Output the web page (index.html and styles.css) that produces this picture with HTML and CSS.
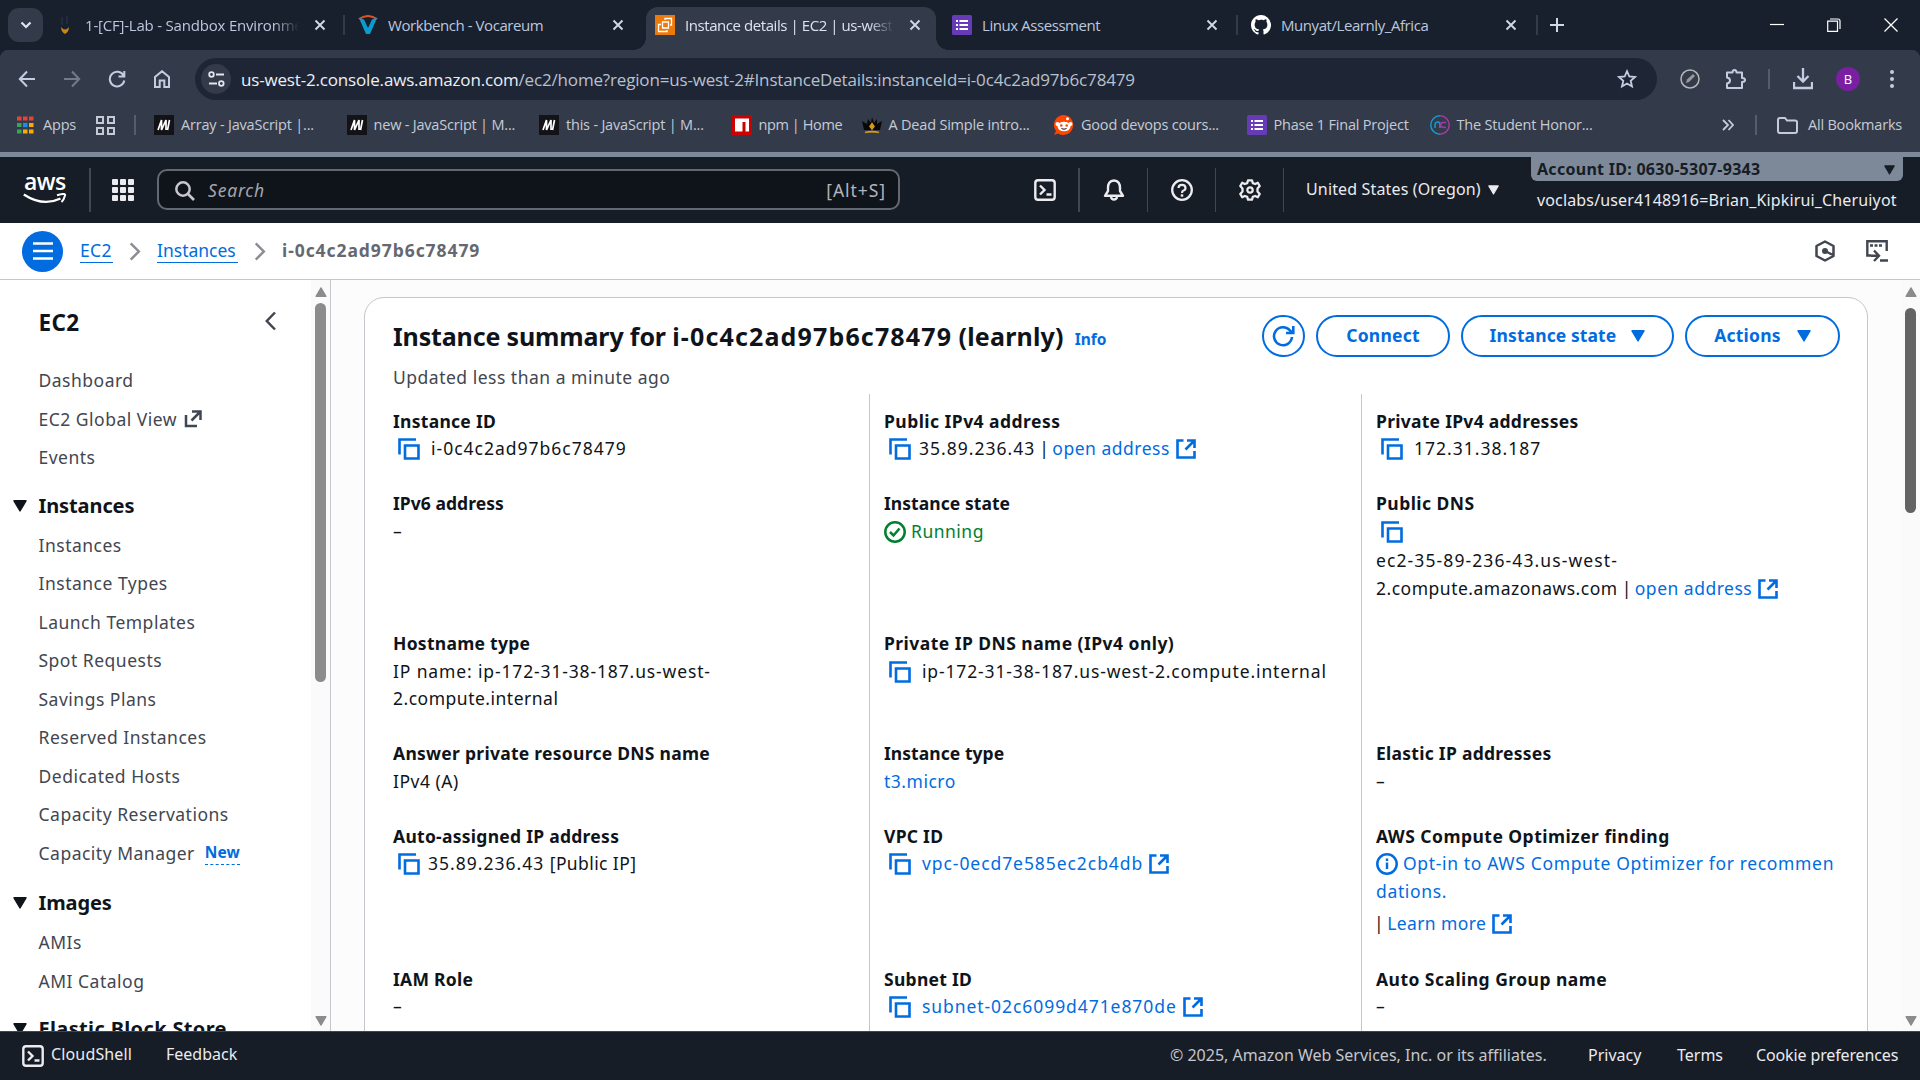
FILE: index.html
```html
<!DOCTYPE html>
<html lang="en">
<head>
<meta charset="utf-8">
<title>Instance details | EC2 | us-west-2</title>
<link rel="stylesheet" href="styles.css">
</head>
<body>
<svg class="defs" aria-hidden="true">
  <symbol id="x" viewBox="0 0 12 12"><path d="M1.5 1.5l9 9M10.5 1.5l-9 9" fill="none" stroke="currentColor" stroke-width="1.9"/></symbol>
  <symbol id="copy" viewBox="0 0 22 22"><path d="M1.5 16.500V1.500H18M7 7.500h13.500v13H7z" fill="none" stroke="currentColor" stroke-width="2.600"/></symbol>
  <symbol id="ext" viewBox="0 0 20 20"><path d="M7.500 1.500H1.500V18.500H18.500V12M11 1.500H18.500V9M18 2L9.500 10.500" fill="none" stroke="currentColor" stroke-width="2.600"/></symbol>
  <symbol id="ext2" viewBox="0 0 18 18"><path d="M2 5V16H13M8 1.500H16.500V10M16 2L7.500 10.500" fill="none" stroke="currentColor" stroke-width="2.500"/></symbol>
  <symbol id="tri" viewBox="0 0 14 12"><path d="M1 .8H13L7 11z" fill="currentColor" stroke="currentColor" stroke-width="1.400" stroke-linejoin="round"/></symbol>
  <symbol id="chev" viewBox="0 0 12 20"><path d="M1.500 1.500L10 10L1.500 18.500" fill="none" stroke="currentColor" stroke-width="2.600"/></symbol>
  <symbol id="shell" viewBox="0 0 22 22"><path d="M4 1.300H18Q20.700 1.300 20.700 4V18Q20.700 20.700 18 20.700H4Q1.300 20.700 1.300 18V4Q1.300 1.300 4 1.300zM6 6.500L10.500 11L6 15.500M12.500 15.500H17.500" fill="none" stroke="currentColor" stroke-width="2.400"/></symbol>
  <symbol id="mdn" viewBox="0 0 20 20"><path d="M0 0h20v20H0z" fill="#121217"/><path d="M4 15L7.500 5V15L12 5V15M15.500 5L13.500 15" fill="none" stroke="#fff" stroke-width="1.700"/></symbol>
  <symbol id="form" viewBox="0 0 20 20"><rect width="20" height="20" rx="1.500" fill="#673ab7"/><path d="M7.500 6H16M7.500 10H16M7.500 14H16M4 6h2M4 10h2M4 14h2" stroke="#fff" stroke-width="2"/></symbol>
</svg>

<header class="browser">
  <div class="tabstrip">
    <span class="tab-menu"><svg width="12" height="8" viewBox="0 0 12 8"><path d="M1.500 1.500L6 6L10.500 1.500" fill="none" stroke="currentColor" stroke-width="2.200"/></svg></span>
    <div class="tab tab-a">
      <svg class="fav" viewBox="0 0 20 20"><path d="M6 12Q10 17 14 12Q14 17 10 19Q6 17 6 12z" fill="#c8850f"/><path d="M7 2V10M12 1V9" stroke="#202c3a" stroke-width="2"/></svg>
      <span class="tab-title fade">1-[CF]-Lab - Sandbox Environment</span>
      <svg class="close"><use href="#x"/></svg>
    </div>
    <i class="tab-sep"></i>
    <div class="tab tab-b">
      <svg class="fav" viewBox="0 0 20 20"><path d="M1 4Q10-2 19 4" fill="none" stroke="#d9542b" stroke-width="2"/><path d="M1 3L8 19H12L19 3L14 4.500L10 13L6 4.500z" fill="#0b9bd0"/></svg>
      <span class="tab-title">Workbench - Vocareum</span>
      <svg class="close"><use href="#x"/></svg>
    </div>
    <div class="tab active">
      <svg class="fav" viewBox="0 0 20 20"><path d="M0 0h20v20H0z" fill="#ed7b0c"/><path d="M7.500 7h6v6h-6zM10 5V3.500h6.500V10H15M12 15v1.500H3.500V9.500H6" fill="none" stroke="#fff" stroke-width="1.300"/></svg>
      <span class="tab-title fade">Instance details | EC2 | us-west-2</span>
      <svg class="close"><use href="#x"/></svg>
    </div>
    <div class="tab tab-d">
      <svg class="fav"><use href="#form"/></svg>
      <span class="tab-title">Linux Assessment</span>
      <svg class="close"><use href="#x"/></svg>
    </div>
    <i class="tab-sep"></i>
    <div class="tab tab-b">
      <svg class="fav" viewBox="0 0 16 16"><path fill="#fff" d="M8 0C3.580 0 0 3.580 0 8c0 3.540 2.290 6.530 5.470 7.590.4.070.55-.17.55-.38v-1.490c-2.230.480-2.700-.940-2.700-.940-.360-.920-.890-1.170-.890-1.170-.730-.500.050-.490.050-.490.810.060 1.230.830 1.230.830.720 1.230 1.880.870 2.330.660.070-.520.280-.870.510-1.070-1.780-.2-3.640-.890-3.640-3.950 0-.870.310-1.590.820-2.150-.080-.200-.360-1.020.080-2.120 0 0 .670-.210 2.200.820A7.700 7.700 0 0 1 8 3.870c.680 0 1.360.090 2 .270 1.530-1.040 2.200-.820 2.200-.820.440 1.100.160 1.920.080 2.120.510.560.820 1.270.820 2.150 0 3.070-1.870 3.750-3.650 3.950.290.250.540.730.540 1.480v2.190c0 .210.150.460.550.380A8 8 0 0 0 8 0z"/></svg>
      <span class="tab-title">Munyat/Learnly_Africa</span>
      <svg class="close"><use href="#x"/></svg>
    </div>
    <i class="tab-sep"></i>
    <svg class="plus" width="14" height="14" viewBox="0 0 14 14"><path d="M7 0V14M0 7H14" stroke="currentColor" stroke-width="2"/></svg>
    <div class="window">
      <svg width="14" height="14" viewBox="0 0 14 14"><path d="M0 6.500H14" stroke="#fff" stroke-width="1.200"/></svg>
      <svg width="14" height="14" viewBox="0 0 14 14"><path d="M.7 3.200H10.500V13.300H.7zM3 1H11Q13 1 13 3V11" fill="none" stroke="#fff" stroke-width="1.200"/></svg>
      <svg width="14" height="14" viewBox="0 0 14 14"><path d="M.5.5L13.500 13.500M13.500.5L.5 13.500" stroke="#fff" stroke-width="1.300"/></svg>
    </div>
  </div>
  <div class="toolbar">
    <nav class="nav">
      <svg viewBox="0 0 18 18"><path d="M17 9H2M9 1.500L1.800 9L9 16.500" fill="none" stroke="currentColor" stroke-width="2"/></svg>
      <svg class="dim" viewBox="0 0 18 18"><path d="M1 9H16M9 1.500L16.200 9L9 16.500" fill="none" stroke="currentColor" stroke-width="2"/></svg>
      <svg viewBox="0 0 18 18"><path d="M15.500 5.500A7.300 7.300 0 1 0 16.300 10.500M16.300 1V6.500H10.500" fill="none" stroke="currentColor" stroke-width="2"/></svg>
      <svg viewBox="0 0 18 18"><path d="M2 7L9 1.200L16 7V17H11.300V10.500H6.700V17H2z" fill="none" stroke="currentColor" stroke-width="2"/></svg>
    </nav>
    <div class="omnibox">
      <span class="site"><svg width="17" height="16" viewBox="0 0 17 16"><path d="M8 3.500H16M1 12.500H9" stroke="currentColor" stroke-width="2"/><circle cx="3.500" cy="3.500" r="2.300" fill="none" stroke="currentColor" stroke-width="1.800"/><circle cx="13.300" cy="12.500" r="2.300" fill="none" stroke="currentColor" stroke-width="1.800"/></svg></span>
      <span class="url"><b>us-west-2.console.aws.amazon.com</b>/ec2/home?region=us-west-2#InstanceDetails:instanceId=i-0c4c2ad97b6c78479</span>
      <svg width="20" height="20" viewBox="0 0 20 20"><path d="M10 2.200L12.300 7.500L18 8L13.700 11.800L15 17.500L10 14.500L5 17.500L6.300 11.800L2 8L7.700 7.500z" fill="none" stroke="currentColor" stroke-width="1.800"/></svg>
    </div>
    <div class="actions">
      <svg width="20" height="20" viewBox="0 0 20 20"><circle cx="10" cy="10" r="9" fill="none" stroke="#b5b7b9" stroke-width="1.500"/><path d="M6 14L7 10.500L13 5L15 7L9 13z" fill="#999"/></svg>
      <svg class="puzzle" width="22" height="22" viewBox="0 0 22 22"><path d="M2 4.500H7.500Q7.500 2 9.500 2T11.500 4.500H17V10Q20 10 20 12T17 14V20H2V15.500Q5 15 5 12.500T2 9.500z" fill="none" stroke="currentColor" stroke-width="2" stroke-linejoin="round"/></svg>
      <i class="bar-sep"></i>
      <svg class="dl" width="20" height="22" viewBox="0 0 20 22"><path d="M10 0V13M4.500 8L10 13.500L15.500 8M1 14V20H19V14" fill="none" stroke="currentColor" stroke-width="2.300"/></svg>
      <span class="avatar">B</span>
      <svg width="6" height="20" viewBox="0 0 6 20" fill="currentColor"><circle cx="3" cy="3" r="2"/><circle cx="3" cy="10" r="2"/><circle cx="3" cy="17" r="2"/></svg>
    </div>
  </div>
  <div class="bookmarks">
    <span class="apps"><svg width="17" height="18" viewBox="0 0 17 18"><path d="M0 2.500H4.500M6 2.500H10.500M12 2.500H16.500" stroke="#ea4335" stroke-width="4.200"/><path d="M0 9H4.500M0 15.500H4.500" stroke="#34a853" stroke-width="4.200"/><path d="M6 9H10.500" stroke="#1a8cf0" stroke-width="4.200"/><path d="M12 9H16.500M6 15.500H10.500M12 15.500H16.500" stroke="#fbab08" stroke-width="4.200"/></svg>Apps</span>
    <svg class="groups" width="19" height="19" viewBox="0 0 19 19"><path d="M1 1h6v6H1zM12 1h6v6h-6zM1 12h6v6H1zM12 12h6v6h-6z" fill="none" stroke="currentColor" stroke-width="2"/></svg>
    <i class="bar-sep"></i>
    <div class="marks">
      <span class="mark"><svg><use href="#mdn"/></svg>Array - JavaScript |...</span>
      <span class="mark"><svg><use href="#mdn"/></svg>new - JavaScript | M...</span>
      <span class="mark"><svg><use href="#mdn"/></svg>this - JavaScript | M...</span>
      <span class="mark short"><svg viewBox="0 0 20 20"><path d="M0 0h20v20H0z" fill="#c00"/><path d="M3 3.500H17V16.500H13.500V7H10.500V16.500H3z" fill="#fff"/></svg>npm | Home</span>
      <span class="mark"><svg viewBox="0 0 20 20"><path d="M2 15L0 6L5 9L6 4L9 8L10 2L12 8L15 4L15 9L20 6L18 15z" fill="#080808"/><path d="M3 17.500Q10 15.500 17 17.500M10 8.500L12 11.500L10 14L8 11.500z" stroke="#d99a13" fill="#d99a13" stroke-width="1.500"/></svg>A Dead Simple intro...</span>
      <span class="mark"><svg viewBox="0 0 20 20"><path d="M10 0A10 10 0 1 1 4 18.500L0 20L2 16A10 10 0 0 1 10 0z" fill="#ff4500"/><ellipse cx="10" cy="11.500" rx="6.500" ry="4.800" fill="#fff"/><circle cx="3.500" cy="9" r="2" fill="#fff"/><circle cx="16.500" cy="9" r="2" fill="#fff"/><circle cx="13.500" cy="3.800" r="1.500" fill="#fff"/><circle cx="7.300" cy="10.500" r="1.300" fill="#ff4500"/><circle cx="12.700" cy="10.500" r="1.300" fill="#ff4500"/><path d="M7.500 13.500Q10 15 12.500 13.500" fill="none" stroke="#111"/></svg>Good devops cours...</span>
      <span class="mark phase"><svg><use href="#form"/></svg>Phase 1 Final Project</span>
      <span class="mark"><svg viewBox="0 0 20 20"><path d="M10 .8A9.200 9.200 0 1 0 10 19.200M5 13V10Q5 7 8 7Q10 7 10 10V13" fill="none" stroke="#119bd2" stroke-width="1.500"/><path d="M10 .8A9.200 9.200 0 0 1 10 19.200M16 7.500H13Q10.500 7.500 10.500 10Q10.500 12.500 16 12.500" fill="none" stroke="#a43ba5" stroke-width="1.500"/></svg>The Student Honor...</span>
    </div>
    <svg class="more" width="12" height="12" viewBox="0 0 12 12"><path d="M1 1L6 6L1 11M6.500 1L11 6L6.500 11" fill="none" stroke="currentColor" stroke-width="1.800"/></svg>
    <i class="bar-sep"></i>
    <span class="all"><svg width="21" height="17" viewBox="0 0 21 17"><path d="M1 3V14Q1 16 3 16H18Q20 16 20 14V5Q20 3.500 18 3.500H10L8 1H3Q1 1 1 3z" fill="none" stroke="currentColor" stroke-width="2"/></svg>All Bookmarks</span>
  </div>
</header>

<header class="aws">
  <div class="logo"><span>aws</span><svg width="44" height="12" viewBox="0 0 44 12"><path d="M.8 1.500Q20 14 37.500 5.500" fill="none" stroke="#fff" stroke-width="2.300"/><path d="M34 2.300Q43-.5 42 2.500Q41 6.500 38.500 9" fill="none" stroke="#fff" stroke-width="2"/></svg></div>
  <i class="aws-sep"></i>
  <svg class="services" width="22" height="22" viewBox="0 0 22 22"><g fill="#ebebf0"><rect width="6" height="6" rx="1"/><rect x="8" width="6" height="6" rx="1"/><rect x="16" width="6" height="6" rx="1"/><rect y="8" width="6" height="6" rx="1"/><rect x="8" y="8" width="6" height="6" rx="1"/><rect x="16" y="8" width="6" height="6" rx="1"/><rect y="16" width="6" height="6" rx="1"/><rect x="8" y="16" width="6" height="6" rx="1"/><rect x="16" y="16" width="6" height="6" rx="1"/></g></svg>
  <div class="search">
    <svg width="20" height="20" viewBox="0 0 20 20"><circle cx="8" cy="8" r="6.700" fill="none" stroke="currentColor" stroke-width="2.500"/><path d="M12.500 12.500L19 19" stroke="currentColor" stroke-width="2.700"/></svg>
    <em>Search</em><span>[Alt+S]</span>
  </div>
  <div class="tools">
    <span class="tool"><svg><use href="#shell"/></svg></span>
    <span class="tool"><svg viewBox="0 0 22 22"><path d="M11 1.500C6.500 1.500 5 5 5 9V12L2 16.800H20L17 12V9C17 5 15.500 1.500 11 1.500zM8 18Q8.500 20.500 11 20.500T14 18" fill="none" stroke="currentColor" stroke-width="2.400" stroke-linejoin="round"/></svg></span>
    <span class="tool"><svg viewBox="0 0 22 22"><circle cx="11" cy="11" r="9.800" fill="none" stroke="currentColor" stroke-width="2.300"/><path d="M7.500 9Q7.500 5.800 11 5.800T14.500 9Q14.500 11 12.500 11.500Q11 12 11 14" fill="none" stroke="currentColor" stroke-width="2.200"/><path d="M11 15.300V17.700" stroke="currentColor" stroke-width="2.500"/></svg></span>
    <span class="tool"><svg viewBox="0 0 22 22"><path d="M9 1.300H13L13.800 4.200L16.200 5L18.800 3.700L20.700 7L18.500 9.500V12.500L20.700 15L18.800 18.300L16.200 17L13.800 17.800L13 20.700H9L8.200 17.800L5.800 17L3.200 18.300L1.300 15L3.500 12.500V9.500L1.300 7L3.200 3.700L5.800 5L8.200 4.200z" fill="none" stroke="currentColor" stroke-width="2.300" stroke-linejoin="round"/><circle cx="11" cy="11" r="2.700" fill="none" stroke="currentColor" stroke-width="2.200"/></svg></span>
  </div>
  <span class="region">United States (Oregon)<svg width="11" height="10"><use href="#tri"/></svg></span>
  <div class="account">
    <div class="account-id">Account ID: 0630-5307-9343<svg width="11" height="10"><use href="#tri"/></svg></div>
    <div class="account-user">voclabs/user4148916=Brian_Kipkirui_Cheruiyot</div>
  </div>
</header>

<div class="crumbs">
  <span class="menu"><svg width="20" height="18" viewBox="0 0 20 18"><path d="M0 1.500H20M0 9H20M0 16.500H20" stroke="#fff" stroke-width="2.500"/></svg></span>
  <a class="crumb c1">EC2</a>
  <svg class="chev"><use href="#chev"/></svg>
  <a class="crumb c2">Instances</a>
  <svg class="chev"><use href="#chev"/></svg>
  <b class="current">i-0c4c2ad97b6c78479</b>
  <div class="side-tools">
    <svg width="20" height="22" viewBox="0 0 20 22"><path d="M10 1.500L18.500 6V16L10 20.500L1.500 16V6zM10 11L18 15" fill="none" stroke="currentColor" stroke-width="2.500" stroke-linejoin="round"/><circle cx="10" cy="11" r="3" fill="currentColor"/></svg>
    <svg width="22" height="22" viewBox="0 0 22 22"><path d="M5 15.500H1.300V1.300H20.700V11M14 20.500H22M5 15.800H12M8 10.500L13 15.800L8 21" fill="none" stroke="currentColor" stroke-width="2.400"/><path d="M4 5.500H16" stroke="currentColor" stroke-width="2.500" stroke-dasharray="3 1.500"/></svg>
  </div>
</div>

<div class="body">
  <aside class="sidebar">
    <div class="side-content">
      <div class="side-head"><h2>EC2</h2><svg width="11" height="20" viewBox="0 0 11 20"><path d="M10 1.500L1.800 10L10 18.500" fill="none" stroke="#424650" stroke-width="2.500"/></svg></div>
      <ul class="top">
        <li>Dashboard</li>
        <li>EC2 Global View<svg width="18" height="18"><use href="#ext2"/></svg></li>
        <li>Events</li>
      </ul>
      <h3><svg><use href="#tri"/></svg>Instances</h3>
      <ul>
        <li>Instances</li><li>Instance Types</li><li>Launch Templates</li><li>Spot Requests</li><li>Savings Plans</li><li>Reserved Instances</li><li>Dedicated Hosts</li><li>Capacity Reservations</li><li>Capacity Manager<b class="new">New</b></li>
      </ul>
      <h3 class="images"><svg><use href="#tri"/></svg>Images</h3>
      <ul><li>AMIs</li><li>AMI Catalog</li></ul>
      <h3 class="ebs"><svg><use href="#tri"/></svg>Elastic Block Store</h3>
    </div>
    <div class="scroll"><svg class="up"><use href="#tri"/></svg><i></i><svg class="down"><use href="#tri"/></svg></div>
  </aside>
  <main class="main">
    <section class="card">
      <div class="card-head">
        <h1>Instance summary for <span class="id">i-0c4c2ad97b6c78479</span> <span class="name">(learnly)</span></h1><b class="info">Info</b>
        <div class="buttons">
          <span class="btn round"><svg width="23" height="22" viewBox="0 0 23 22"><path d="M20 12A9 9 0 1 1 18 5.500L20.500 8M21.300 1V8H14" fill="none" stroke="currentColor" stroke-width="2.600"/></svg></span>
          <span class="btn connect">Connect</span>
          <span class="btn state">Instance state<svg><use href="#tri"/></svg></span>
          <span class="btn act">Actions<svg><use href="#tri"/></svg></span>
        </div>
      </div>
      <p class="updated">Updated less than a minute ago</p>
      <div class="cols">
        <div class="col">
          <dl><dt>Instance ID</dt><dd class="num"><svg class="copy wide"><use href="#copy"/></svg>i-0c4c2ad97b6c78479</dd></dl>
          <dl><dt class="snug">IPv6 address</dt><dd>–</dd></dl>
          <dl><dt>Hostname type</dt><dd><span class="dns">IP name: ip-172-31-38-187.us-west-</span><br>2.compute.internal</dd></dl>
          <dl><dt>Answer private resource DNS name</dt><dd>IPv4 (A)</dd></dl>
          <dl><dt>Auto-assigned IP address</dt><dd class="num"><svg class="copy"><use href="#copy"/></svg>35.89.236.43 <span class="plain">[Public IP]</span></dd></dl>
          <dl><dt>IAM Role</dt><dd>–</dd></dl>
        </div>
        <div class="col">
          <dl><dt class="loose">Public IPv4 address</dt><dd><svg class="copy tight"><use href="#copy"/></svg><span class="num">35.89.236.43</span><i class="bar">|</i><a>open address<svg class="ext"><use href="#ext"/></svg></a></dd></dl>
          <dl><dt class="snug">Instance state</dt><dd class="running"><svg class="status" viewBox="0 0 22 22"><circle cx="11" cy="11" r="9.700" fill="none" stroke="currentColor" stroke-width="2.500"/><path d="M6 11L9.500 14.500L15.500 7.500" fill="none" stroke="currentColor" stroke-width="2.500"/></svg>Running</dd></dl>
          <dl><dt class="loose">Private IP DNS name (IPv4 only)</dt><dd class="dns"><svg class="copy wide"><use href="#copy"/></svg>ip-172-31-38-187.us-west-2.compute.internal</dd></dl>
          <dl><dt class="snug">Instance type</dt><dd><a>t3.micro</a></dd></dl>
          <dl><dt>VPC ID</dt><dd class="num"><svg class="copy wide"><use href="#copy"/></svg><a class="rid">vpc-0ecd7e585ec2cb4db<svg class="ext"><use href="#ext"/></svg></a></dd></dl>
          <dl><dt>Subnet ID</dt><dd class="num"><svg class="copy wide"><use href="#copy"/></svg><a class="rid">subnet-02c6099d471e870de<svg class="ext"><use href="#ext"/></svg></a></dd></dl>
        </div>
        <div class="col">
          <dl><dt>Private IPv4 addresses</dt><dd class="num"><svg class="copy wide"><use href="#copy"/></svg>172.31.38.187</dd></dl>
          <dl><dt class="loose">Public DNS</dt><dd><svg class="copy"><use href="#copy"/></svg><div class="host"><span class="ec2">ec2-35-89-236-43.us-west-</span><br>2.compute.amazonaws.com<i class="bar">|</i><a>open address<svg class="ext"><use href="#ext"/></svg></a></div></dd></dl>
          <dl></dl>
          <dl><dt>Elastic IP addresses</dt><dd>–</dd></dl>
          <dl><dt class="loose">AWS Compute Optimizer finding</dt><dd class="opt"><a><svg class="status" viewBox="0 0 22 22"><circle cx="11" cy="11" r="9.700" fill="none" stroke="currentColor" stroke-width="2.500"/><path d="M11 9.500V16M11 5.500V8" stroke="currentColor" stroke-width="2.400"/></svg>Opt-in to AWS Compute Optimizer for recommen<br>dations.</a><div class="learn"><i class="bar">|</i><a>Learn more<svg class="ext"><use href="#ext"/></svg></a></div></dd></dl>
          <dl><dt class="loose">Auto Scaling Group name</dt><dd>–</dd></dl>
        </div>
      </div>
    </section>
    <div class="scroll page"><svg class="up"><use href="#tri"/></svg><i></i><svg class="down"><use href="#tri"/></svg></div>
  </main>
</div>

<footer class="footer">
  <svg width="22" height="22"><use href="#shell"/></svg><span class="shell">CloudShell</span><span class="fb">Feedback</span>
  <div class="legal"><span class="copyr">© 2025, Amazon Web Services, Inc. or its affiliates.</span><span class="f1">Privacy</span><span class="f2">Terms</span><span class="f3">Cookie preferences</span></div>
</footer>
</body>
</html>
```

FILE: styles.css
```css
* { box-sizing: border-box; }
body {
  margin: 0; width: 1920px; height: 1080px; overflow: hidden;
  display: flex; flex-direction: column;
  font-family: "Noto Sans", sans-serif; font-size: 17.5px; line-height: 27.5px; color: #0f141a;
}
svg { flex: none; display: block; }
h1, h2, h3, ul, dl, dt, dd, p { margin: 0; padding: 0; }
ul { list-style: none; }
a { color: #006ce0; }
.defs { position: absolute; width: 0; height: 0; }

/* Browser chrome */
.browser { flex: none; height: 157px; background: #333b4b; border-bottom: 5px solid #7d8998; color: #c5cbd6; font-family: "Open Sans", sans-serif; font-size: 15px; line-height: 20px; }
.tabstrip { height: 50px; background: #18202e; display: flex; align-items: center; padding-left: 8px; color: #bdc7dc; }
.tab-menu { width: 35px; height: 34px; border-radius: 11px; background: #333b4b; color: #dfe5f0; display: flex; align-items: center; justify-content: center; }
.tab { display: flex; align-items: center; white-space: nowrap; }
.tab-a { width: 300px; padding: 0 17px 0 12px; }
.tab-b { width: 298px; padding: 0 19px 0 13px; }
.tab-d { width: 300px; padding: 0 18px 0 16px; }
.tab.active { position: relative; width: 290px; height: 43px; margin: 7px 0 0 3px; padding: 0 15px 7px 9px; background: #333b4b; border-radius: 12px 12px 0 0; color: #dde3ef; }
.tab.active::before, .tab.active::after { content: ""; position: absolute; bottom: 0; width: 12px; height: 12px; }
.tab.active::before { left: -12px; background: radial-gradient(circle at 0 0, transparent 11.5px, #333b4b 12px); }
.tab.active::after { right: -12px; background: radial-gradient(circle at 100% 0, transparent 11.5px, #333b4b 12px); }
.fav { width: 20px; height: 20px; margin-right: 10px; }
.tab-title { flex: 1; overflow: hidden; margin-right: 15px; letter-spacing: -.43px; }
.fade { -webkit-mask-image: linear-gradient(to right, #000 88%, transparent); mask-image: linear-gradient(to right, #000 88%, transparent); }
.tab-a .tab-title { letter-spacing: -.2px; }
.close { width: 12px; height: 12px; color: #d0d8e8; }
.tab-sep { width: 2px; height: 20px; background: #333b4b; }
.plus { margin-left: 12px; color: #d0d8e8; }
.window { margin-left: auto; display: flex; gap: 43px; padding-right: 22px; }
.toolbar { height: 58px; display: flex; align-items: center; padding-left: 18px; background: radial-gradient(circle at 9px 9px, #333b4b 9px, #18202e 9.5px) 0 0 / 9px 9px no-repeat, radial-gradient(circle at 0 9px, #333b4b 9px, #18202e 9.5px) 100% 0 / 9px 9px no-repeat; color: #c3cde2; }
.nav { display: flex; gap: 27px; width: 177px; }
.nav svg { width: 18px; height: 18px; }
.dim { color: #727b8c; }
.omnibox { width: 1462px; height: 42px; border-radius: 21px; background: #1e2636; display: flex; align-items: center; padding: 0 20px 0 6px; font-size: 17px; }
.site { width: 30px; height: 30px; border-radius: 15px; background: #333b4b; color: #e1e5ee; display: flex; align-items: center; justify-content: center; }
.url { flex: 1; margin: 1px 0 0 10px; color: #b9c0cd; letter-spacing: -.17px; }
.url b { font-weight: 400; color: #eceff5; }
.actions { display: flex; align-items: center; margin-left: 23px; }
.puzzle { margin: 0 21px 0 25px; }
.bar-sep { width: 2px; height: 20px; background: #545d6d; }
.dl { margin: 0 23px; }
.avatar { width: 24px; height: 24px; border-radius: 50%; background: #7b1fa2; color: #fff; display: flex; align-items: center; justify-content: center; font-size: 13px; margin-right: 29px; }
.bookmarks { height: 34px; display: flex; align-items: center; padding-left: 17px; font-size: 14.5px; letter-spacing: -.2px; white-space: nowrap; }
.apps { display: flex; align-items: center; gap: 9px; width: 79px; }
.groups { margin-right: 19px; color: #c5cbd6; }
.marks { display: flex; margin-left: 18px; width: 1568px; }
.mark { width: 192.500px; display: flex; align-items: center; }
.mark svg { width: 20px; height: 20px; margin-right: 7px; }
.mark.short { width: 130px; letter-spacing: -.4px; }
.mark.phase { width: 183px; }
.more { margin-right: 21px; }
.all { display: flex; align-items: center; gap: 10px; margin-left: 20px; }

/* Console header */
.aws { flex: none; height: 66px; background: #161d26; display: flex; color: #ebebf0; padding-left: 23px; }
.logo { width: 66px; padding-top: 12px; color: #fff; }
.logo span { display: block; font: 600 23px/25px "Open Sans", sans-serif; letter-spacing: -.5px; padding-left: 1px; }
.logo svg { margin-top: -1px; }
.aws-sep { width: 2px; height: 44px; margin-top: 11px; background: #424650; }
.services { margin: 22px 0 0 21px; }
.search { width: 743px; height: 41px; margin: 12px 0 0 23px; border: 2px solid #656871; border-radius: 10px; background: #0f141a; display: flex; align-items: center; padding: 2px 12px 0 16px; color: #c6c6cd; }
.search em { flex: 1; margin-left: 13px; color: #a4a4ad; letter-spacing: .8px; }
.search span { color: #b4b4bb; letter-spacing: .95px; }
.tools { display: flex; margin-left: 111px; padding-top: 11px; }
.tool { width: 68px; height: 44px; padding: 11px 0 0 23px; border-right: 1px solid #424650; }
.tool:first-child { width: 69px; border-right-width: 2px; }
.tool svg { width: 22px; height: 22px; }
.region { display: flex; align-items: center; gap: 7px; width: 247px; padding-left: 22px; font-size: 16px; letter-spacing: .15px; margin-top: -1px; }
.account { width: 372px; }
.account-id { height: 24px; padding: 2px 8px 0 6px; display: flex; align-items: center; justify-content: space-between; background: #7d8998; color: #161d26; border-radius: 0 0 6px 6px; font-weight: 700; font-size: 16px; letter-spacing: .28px; }
.account-user { padding-left: 6px; margin-top: 6px; font-size: 16px; letter-spacing: .15px; white-space: nowrap; }

/* Breadcrumb bar */
.crumbs { flex: none; height: 57px; background: #fff; border-bottom: 1px solid #c6c6cd; display: flex; align-items: center; padding-left: 22px; }
.menu { width: 41px; height: 41px; border-radius: 50%; background: #006ce0; display: flex; align-items: center; justify-content: center; }
.crumb { line-height: 23px; border-bottom: 1px solid #006ce0; white-space: nowrap; }
.c1 { margin-left: 17px; width: 33px; letter-spacing: .3px; }
.c2 { width: 81px; }
.chev { width: 12px; height: 19px; margin: 0 16px; color: #8c8c94; }
.current { color: #656871; letter-spacing: .93px; }
.side-tools { margin-left: auto; display: flex; gap: 31px; padding-right: 32px; color: #424650; }

/* Side navigation */
.body { flex: 1; min-height: 0; display: flex; overflow: hidden; background: #fcfcfd; }
.sidebar { width: 331px; flex: none; border-right: 1px solid #c6c6cd; display: flex; background: #fff; }
.side-content { flex: 1; padding: 26px 35px 0 38.5px; color: #424650; letter-spacing: .5px; }
.side-head { display: flex; justify-content: space-between; height: 33px; align-items: center; }
.side-head h2 { font-size: 22.500px; color: #0f141a; letter-spacing: .3px; }
.side-head svg { margin-bottom: 3px; }
.top { margin-top: 22px; }
li { height: 38.500px; line-height: 38.500px; display: flex; align-items: center; white-space: nowrap; }
li svg { margin-left: 7px; }
h3 { display: flex; align-items: center; height: 30px; font-size: 20px; color: #0f141a; margin: 14px 0 5px -26px; white-space: nowrap; letter-spacing: -.1px; }
h3.images { margin-top: 16px; }
h3.ebs { letter-spacing: .35px; }
h3 svg { width: 14px; height: 12px; margin-right: 12px; }
.new { color: #006ce0; font-size: 15.5px; line-height: 24px; border-bottom: 1px dashed #006ce0; margin-left: 10px; letter-spacing: 0; }
.scroll { width: 19px; background: #fafafa; display: flex; flex-direction: column; align-items: center; padding: 7px 0 5px; color: #8b8b8b; }
.scroll svg { width: 12px; height: 10px; }
.scroll .up { transform: rotate(180deg); }
.scroll .down { margin-top: auto; }
.scroll i { width: 11px; height: 379px; margin-top: 6px; border-radius: 6px; background: #8b8b8b; }

/* Instance summary */
.main { flex: 1; display: flex; justify-content: space-between; }
.card { width: 1504px; margin: 17px 0 -40px 33px; background: #fff; border: 1px solid #c6c6cd; border-radius: 20px; padding: 17px 27px 0 28px; }
.card-head { display: flex; height: 42px; align-items: center; white-space: nowrap; }
h1 { font-size: 25px; line-height: 30px; letter-spacing: -.15px; }
.id { letter-spacing: 1.15px; }
.name { letter-spacing: .2px; }
.info { font-size: 15.5px; color: #006ce0; margin: 7px 0 0 11px; }
.buttons { margin-left: auto; display: flex; gap: 11px; }
.btn { height: 42px; border: 2px solid #006ce0; border-radius: 21px; color: #006ce0; font-weight: 700; display: flex; align-items: center; justify-content: center; gap: 15px; letter-spacing: .2px; }
.btn svg { width: 14px; height: 12px; }
.round { width: 43px; }
.round svg { width: 23px; height: 22px; }
.connect { width: 134px; }
.state { width: 213px; letter-spacing: .1px; }
.act { width: 155px; gap: 16px; }
.updated { margin-top: 7px; color: #424650; letter-spacing: .5px; }
.cols { display: grid; grid-template-columns: 476px 492px 1fr; height: 700px; margin-top: 2px; }
.col { display: grid; grid-template-rows: 82.500px 140px 110px 82.500px 143px 120px; padding-top: 14px; white-space: nowrap; }
.col + .col { border-left: 1px solid #c6c6cd; padding-left: 14px; }
dt { font-weight: 700; letter-spacing: .27px; }
dt.loose { letter-spacing: .46px; }
dt.snug { letter-spacing: .05px; }
dd { letter-spacing: .5px; }
.num { letter-spacing: 1px; }
.rid { letter-spacing: .93px; }
.plain { letter-spacing: .4px; }
.dns { letter-spacing: .86px; }
.ec2 { letter-spacing: 1.1px; }
.opt { letter-spacing: .65px; }
.bar { font-style: normal; letter-spacing: 0; margin: 0 3.5px 0 4px; }
dd svg { display: inline-block; vertical-align: -5px; }
.copy { width: 22px; height: 22px; margin: 0 8px 0 5px; color: #006ce0; }
.wide { margin-right: 11px; }
.tight { margin-right: 8px; }
.ext { width: 20px; height: 20px; margin-left: 6px; vertical-align: -4px; }
.status { width: 22px; height: 22px; margin-right: 5px; }
.running { color: #00802f; }
.host { margin-top: 2px; }
.learn { margin-top: 5px; letter-spacing: .4px; }
.learn .bar { margin-left: -2px; }
.page { padding-top: 7px; color: #8b8b8b; }
.page i { height: 205px; margin-top: 11px; background: #636363; }

/* Footer */
.footer { flex: none; height: 49px; background: #161d26; border-top: 1px solid #424650; color: #ebebf0; display: flex; align-items: center; padding-left: 22px; font-size: 16px; white-space: nowrap; }
.footer > span { margin-top: -3px; }
.shell { margin-left: 7px; width: 115px; letter-spacing: .15px; }
.legal { margin: -1px 0 0 auto; display: flex; width: 750px; }
.copyr { width: 418px; color: #c6c6cd; }
.f1 { width: 89px; }
.f2 { width: 79px; }
.f3 { letter-spacing: -.13px; }
```
